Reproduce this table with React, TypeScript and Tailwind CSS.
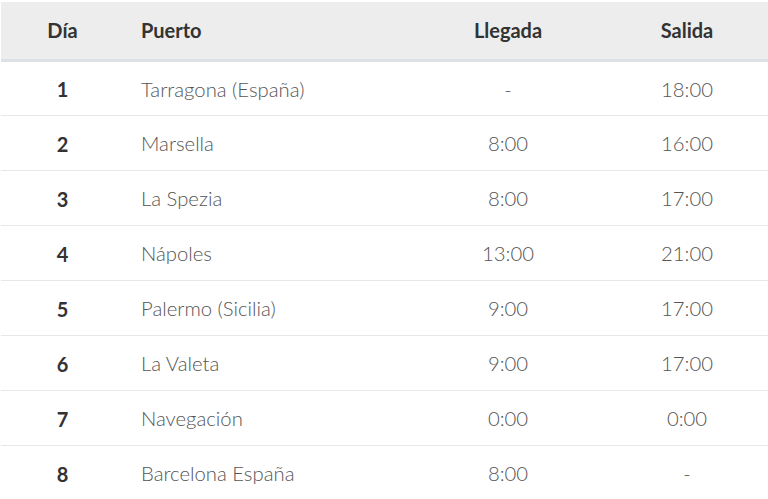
import React from "react";

const rows = [
  ["1", "Tarragona (España)", "-", "18:00"],
  ["2", "Marsella", "8:00", "16:00"],
  ["3", "La Spezia", "8:00", "17:00"],
  ["4", "Nápoles", "13:00", "21:00"],
  ["5", "Palermo (Sicilia)", "9:00", "17:00"],
  ["6", "La Valeta", "9:00", "17:00"],
  ["7", "Navegación", "0:00", "0:00"],
  ["8", "Barcelona España", "8:00", "-"],
];

export default function App() {
  return (
    <div className="w-[768px] h-[499px] overflow-hidden bg-white pt-[2px]" style={{ fontFamily: "Lato, 'Noto Sans', sans-serif" }}>
      <table className="w-[767px] ml-[1px] border-collapse table-fixed">
        <colgroup>
          <col className="w-[123px]" />
          <col className="w-[294px]" />
          <col className="w-[180px]" />
          <col className="w-[170px]" />
        </colgroup>
        <thead>
          <tr className="bg-[#ededed] border-b-[3px] border-[#dde1e5] h-[58px] text-[20px] font-bold text-[#333]">
            <th className="text-center">Día</th>
            <th className="text-left pl-[17px]">Puerto</th>
            <th className="text-center">Llegada</th>
            <th className="text-center pl-[8px]">Salida</th>
          </tr>
        </thead>
        <tbody>
          {rows.map((r) => (
            <tr key={r[0]} className="h-[55px] border-b border-[#e8e8e8] text-[20.3px] text-[#555]">
              <td className="text-center font-bold text-[#333] text-[20px] pt-[2px]">{r[0]}</td>
              <td className="text-left pl-[17px] font-light pt-[2px]">{r[1]}</td>
              <td className="text-center font-light pt-[2px]">{r[2]}</td>
              <td className="text-center font-light pl-[8px] pt-[2px]">{r[3]}</td>
            </tr>
          ))}
        </tbody>
      </table>
    </div>
  );
}
